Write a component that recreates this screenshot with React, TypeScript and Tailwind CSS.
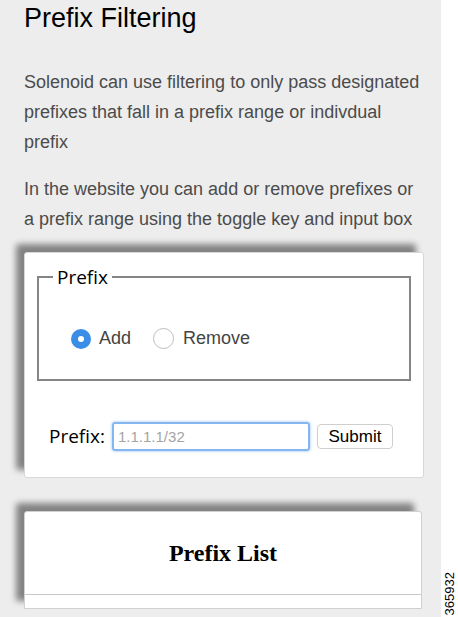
import React from 'react';

const sans = '[font-family:"Liberation_Sans",Arial,sans-serif]';

export default function App() {
  return (
    <div className="flex h-[617px] w-[458px] overflow-hidden bg-white">
      <div className="flex w-[441px] flex-col bg-[#ededed] px-6">
        <h1 className={`${sans} mt-[2px] text-[27px] leading-[32px] text-black`}>Prefix Filtering</h1>
        <p className={`${sans} mt-[33px] w-[400px] text-[18px] leading-[30px] text-[#4b4b4b]`}>
          Solenoid can use filtering to only pass designated prefixes that fall in a prefix range or indivdual prefix
        </p>
        <p className={`${sans} mt-[17px] w-[400px] text-[18px] leading-[30px] text-[#4b4b4b]`}>
          In the website you can add or remove prefixes or a prefix range using the toggle key and input box
        </p>

        <div className="mt-[18px] h-[226px] w-[400px] rounded-[3px] border border-[#d8d8d8] bg-white px-3 pt-[12px] shadow-[-8px_-8px_6px_rgba(0,0,0,0.45)]">
          <fieldset className="h-[116px] border-2 border-solid border-[#858585] pl-[14px] pr-[18px] pt-[36px]">
            <legend className='px-[4px] text-[19px] leading-[24px] text-black [font-family:"Open_Sans",sans-serif]'>Prefix</legend>
            <div className={`${sans} flex items-center pl-[18px] text-[18px] text-[#444]`}>
              <span className="flex h-[20px] w-[20px] items-center justify-center rounded-full bg-[#3a8ee6]">
                <span className="h-[6px] w-[6px] rounded-full bg-white" />
              </span>
              <span className="ml-[8px]">Add</span>
              <span className="ml-[22px] h-[21px] w-[21px] rounded-full border border-[#bdbdbd] bg-white" />
              <span className="ml-[9px]">Remove</span>
            </div>
          </fieldset>
          <div className="mt-[41px] flex items-center pl-[12px]">
            <span className='text-[19px] text-black [font-family:"Open_Sans",sans-serif]'>Prefix:</span>
            <input
              placeholder="1.1.1.1/32"
              className={`${sans} ml-[7px] h-[29px] w-[198px] rounded-[3px] border-2 border-[#85b6ef] px-[4px] text-[15px] shadow-[0_0_3px_#8dbcf5] outline-none placeholder:text-[#a4a4a4]`}
            />
            <button className={`${sans} ml-[7px] h-[25px] w-[76px] rounded-[4px] border border-[#cfcfcf] bg-white text-[17px] leading-[20px] text-black`}>
              Submit
            </button>
          </div>
        </div>

        <div className="mt-[33px] flex h-[98px] w-[398px] flex-col rounded-t-[3px] border border-[#d0d0d0] bg-white shadow-[-8px_-8px_6px_rgba(0,0,0,0.45)]">
          <div className='flex h-[82px] items-center justify-center text-[24px] font-bold text-black [font-family:"Liberation_Serif",serif]'>
            Prefix List
          </div>
          <div className="border-t border-[#c8c8c8]" />
        </div>
      </div>
      <div className="flex flex-1 items-end justify-center pb-[2px]">
        <span className={`${sans} rotate-180 text-[13px] leading-[13px] text-black [writing-mode:vertical-rl]`}>365932</span>
      </div>
    </div>
  );
}
